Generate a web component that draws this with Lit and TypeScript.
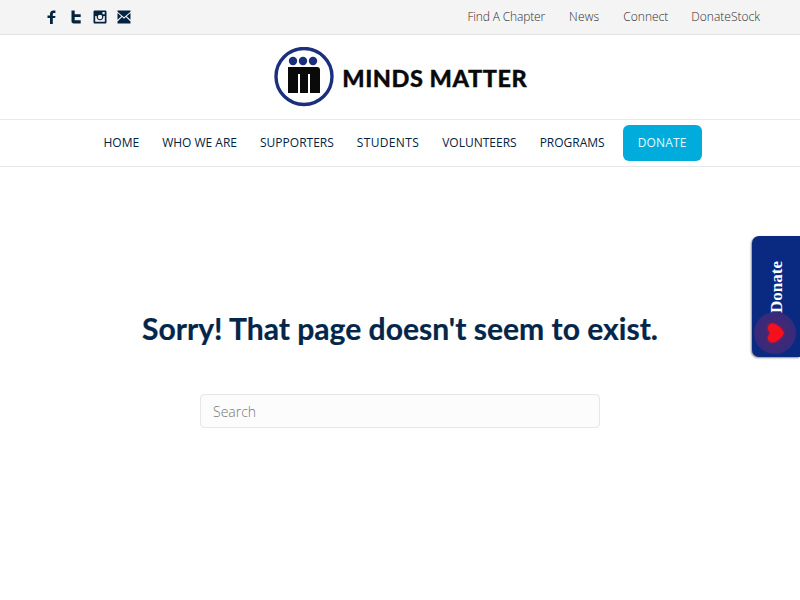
import { LitElement, html, css } from "lit";
import { customElement } from "lit/decorators.js";

@customElement("app-root")
export class AppRoot extends LitElement {
  static styles = css`
    :host { display: block; position: relative; height: 600px; overflow: hidden; background: #fff; font-family: "Open Sans", sans-serif; }
    .top { height: 34px; background: #f4f4f4; border-bottom: 1px solid #e3e4e5; display: flex; justify-content: space-between; align-items: center; padding: 0 40px 0 45px; }
    .social { display: flex; gap: 10px; align-items: center; }
    .social svg { width: 14px; height: 14px; display: block; fill: #04233f; }
    .links { display: flex; gap: 23px; font-size: 12px; font-weight: 300; color: #2e2e2e; padding-bottom: 2px; }
    .tight { letter-spacing: -0.15px; margin-right: 1px; }
    .loose { letter-spacing: 0.2px; margin-right: 1px; }
    .brand { height: 84px; display: flex; justify-content: center; align-items: center; padding-left: 1px; }
    .logo { display: flex; align-items: center; gap: 8.500px; }
    .logo svg { width: 60px; height: 60px; display: block; }
    .logo span { font-family: Lato, sans-serif; font-weight: 900; font-size: 23.5px; letter-spacing: 0.55px; color: #0a0a0a; white-space: nowrap; -webkit-text-stroke: 0.3px #0a0a0a; padding-top: 1px; }
    nav { height: 46px; border-top: 1px solid #e6e8e9; border-bottom: 1px solid #e6e8e9; display: flex; justify-content: center; align-items: center; gap: 23px; font-size: 12px; color: #04233f; padding-left: 5px; }
    .item { padding-bottom: 2px; }
    .wide { letter-spacing: 0.35px; }
    .btn { background: #00acdb; color: #e6f7fc; border-radius: 6px; height: 36px; box-sizing: border-box; padding: 0 15px 2px; display: flex; align-items: center; margin-left: -5px; letter-spacing: 0.15px; }
    main { display: flex; flex-direction: column; align-items: center; padding-top: 142px; }
    h1 { margin: 0; font-family: Lato, sans-serif; font-weight: 700; font-size: 30.1px; line-height: 38px; color: #04264a; -webkit-text-stroke: 0.2px #04264a; }
    .search { margin-top: 47px; width: 400px; height: 34px; box-sizing: border-box; border: 1px solid #e6e6e6; border-radius: 4px; background: #fcfcfc; padding: 0 12px; display: flex; align-items: center; font-size: 14px; font-weight: 300; color: #777; }
    .donate { position: absolute; left: 752px; top: 236px; width: 48px; height: 121px; box-sizing: border-box; background: #0a2a82; border-radius: 7px 0 0 7px; box-shadow: -1px 1px 2px rgba(0,0,0,.45); }
    .donate b { position: absolute; left: 25px; top: 25px; writing-mode: vertical-rl; transform: translateX(-50%) rotate(180deg); font-family: "Liberation Serif", serif; font-size: 17px; font-weight: 700; color: #fff; line-height: 18px; height: 52px; text-align: center; white-space: nowrap; }
    .halo { position: absolute; left: 2px; top: 76px; width: 42px; height: 42px; border-radius: 50%; background: radial-gradient(circle, #4a2772 0%, #382a7a 65%, #242a80 100%); display: flex; align-items: center; justify-content: center; }
    .halo svg { width: 17px; height: 20px; fill: #f5101c; display: block; filter: drop-shadow(0 0 1px #f5101c); }
  `;
  render() {
    return html`
      <div class="top">
        <div class="social">
          <svg viewBox="0 0 14 14"><path d="M5 14V8H2.500V5.400H5V4c0-2.300 1.300-3.500 3.400-3.500.9 0 1.800.1 2 .1v2.400H9.100c-1 0-1.300.5-1.300 1.200v1.700h2.700L10.100 8H7.800v6z"/></svg>
          <svg viewBox="0 0 14 14"><path d="M2.500 .5h3.200v3.800h6V7h-6v3.300h6V13.500H4.700c-1.300 0-2.200-.9-2.200-2.200z"/></svg>
          <svg viewBox="0 0 14 14"><path fill-rule="evenodd" d="M1.800 .5h10.400c.7 0 1.300.6 1.300 1.300v10.400c0 .7-.6 1.300-1.300 1.300H1.800c-.7 0-1.300-.6-1.300-1.300V1.800C.5 1.100 1.100 .5 1.800 .5zm7.700 1.500v2.200h2.200V2zM2.200 6v5.800h9.600V6h-1.500a3.400 3.400 0 1 1-6.600 0zM7 4.800a2.200 2.200 0 1 0 0 4.400 2.200 2.200 0 0 0 0-4.400z"/></svg>
          <svg viewBox="0 0 14 14"><path d="M.5.500h13v1.200L7 7.200.5 1.700zM.5 3l3.800 3.300L.5 9.800zM13.500 3v6.800L9.700 6.300zM.5 11.500l4.600-4.400L7 8.700l1.900-1.600 4.600 4.400v2H.5z"/></svg>
        </div>
        <div class="links"><span class="tight">Find A Chapter</span><span class="loose">News</span><span>Connect</span><span>DonateStock</span></div>
      </div>
      <div class="brand">
        <div class="logo">
          <svg viewBox="0 0 60 60">
            <circle cx="30" cy="29.500" r="28" fill="none" stroke="#1b2f7c" stroke-width="3.400"/>
            <circle cx="19" cy="14" r="4.200" fill="#1b2f7c"/><circle cx="29" cy="14" r="4.200" fill="#1b2f7c"/><circle cx="39" cy="14" r="4.200" fill="#1b2f7c"/>
            <path d="M14 20h29c2 0 3 1 3 3v23H36V27h-2v19H26V27h-2v19H14z" fill="#0a0a0a"/>
          </svg>
          <span>MINDS MATTER</span>
        </div>
      </div>
      <nav>
        <span class="item">HOME</span><span class="item">WHO WE ARE</span><span class="item">SUPPORTERS</span><span class="item wide">STUDENTS</span><span class="item">VOLUNTEERS</span><span class="item">PROGRAMS</span><span class="btn">DONATE</span>
      </nav>
      <main>
        <h1>Sorry! That page doesn't seem to exist.</h1>
        <div class="search">Search</div>
      </main>
      <div class="donate">
        <b>Donate</b>
        <div class="halo"><svg viewBox="0 0 17 20"><path d="M17 10C15 14 10 19 6 19.500 2 19.500 0 16 1.500 13 2.500 11.500 3 10.500 3 10 3 9.500 2.500 8.500 1.500 7 0 4 2 .5 6 .5 10 1 15 6 17 10z"/></svg></div>
      </div>
    `;
  }
}
